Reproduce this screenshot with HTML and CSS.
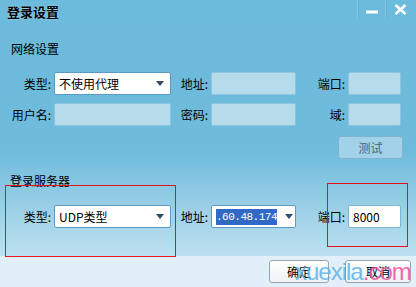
FILE: index.html
```html
<!DOCTYPE html>
<html lang="zh-CN">
<head>
<meta charset="UTF-8">
<title>登录设置</title>
<link rel="stylesheet" href="styles.css">
</head>
<body>
<div class="window">
    <div class="titlebar">
        <span class="title">登录设置</span>
        <div class="win-buttons">
            <span class="win-btn min"><svg width="12" height="4" viewBox="0 0 12 4"><rect x="0" y="0.5" width="12" height="3" fill="#fff"/></svg></span>
            <span class="win-btn close"><svg width="13" height="11" viewBox="0 0 13 11"><path d="M1.5 1 L11.5 10 M11.5 1 L1.5 10" stroke="#fff" stroke-width="2.6"/></svg></span>
        </div>
    </div>

    <div class="section-title">网络设置</div>
    <div class="form-grid">
        <label>类型:</label>
        <div class="select"><span>不使用代理</span><i class="arrow"></i></div>
        <label>地址:</label>
        <div class="input disabled"></div>
        <label>端口:</label>
        <div class="input disabled"></div>

        <label>用户名:</label>
        <div class="input disabled"></div>
        <label>密码:</label>
        <div class="input disabled"></div>
        <label>域:</label>
        <div class="input disabled"></div>
    </div>
    <div class="test-row">
        <button class="btn-test">测试</button>
    </div>

    <div class="section-title second">登录服务器</div>
    <div class="form-grid server">
        <label>类型:</label>
        <div class="select"><span>UDP类型</span><i class="arrow"></i></div>
        <label>地址:</label>
        <div class="select addr"><span class="selected">.60.48.174</span><i class="arrow"></i></div>
        <label>端口:</label>
        <div class="input"><span>8000</span></div>
    </div>

    <div class="footer">
        <button class="btn">确定</button>
        <button class="btn">取消</button>
    </div>

    <div class="mark mark-left"></div>
    <div class="mark mark-right"></div>
    <div class="watermark"><span class="wm-blue">xuexila</span><span class="wm-pink">.com</span></div>
</div>
</body>
</html>
```

FILE: styles.css
```css
body {
    margin: 0;
    padding: 0;
    font-family: "Noto Sans CJK SC", "DejaVu Sans", sans-serif;
    font-size: 12px;
    color: #000;
}
.window {
    position: relative;
    width: 416px;
    height: 287px;
    display: flex;
    flex-direction: column;
    overflow: hidden;
    background: linear-gradient(to bottom, #6dbbdc 0px, #6ebbdc 150px, #a0d2e8 215px, #bde0f0 256px);
}
.titlebar {
    height: 26px;
    display: flex;
    align-items: flex-start;
    justify-content: space-between;
}
.title {
    font-weight: bold;
    font-size: 13px;
    line-height: 15px;
    padding: 4px 0 0 7px;
    color: #000;
    text-shadow: 0 0 2px rgba(255, 255, 255, 0.5);
}
.win-buttons {
    display: flex;
    height: 19px;
    margin-right: 2px;
}
.win-btn {
    width: 27px;
    display: flex;
    align-items: center;
    justify-content: center;
    border-left: 1px solid #86c6e2;
    box-shadow: inset 1px 0 0 #62aed0;
}
.win-btn.min svg {
    margin-top: 4px;
}
.win-btn.close {
    width: 28px;
}
.section-title {
    margin: 15px 0 0 11px;
    line-height: 16px;
}
.section-title.second {
    margin: 14px 0 0 10px;
}
.form-grid {
    display: grid;
    grid-template-columns: 51px 117px 34px 85px 46px 53px;
    grid-auto-rows: 23px;
    column-gap: 3px;
    row-gap: 8px;
    margin-top: 15px;
    align-items: center;
}
.form-grid.server {
    margin-top: 16px;
}
.form-grid label {
    text-align: right;
    white-space: nowrap;
    line-height: 23px;
}
.input,
.select {
    height: 23px;
    box-sizing: border-box;
    border: 1px solid #7fb4d2;
    border-radius: 2px;
    background: #fff;
    display: flex;
    align-items: center;
    padding: 0 4px;
    position: relative;
}
.input.disabled {
    background: #b6dcec;
    border-color: #8ec4de;
}
.select {
    border-color: #5b9ac4;
}
.select span {
    flex: 1;
}
.select .arrow {
    width: 0;
    height: 0;
    border-left: 4px solid transparent;
    border-right: 4px solid transparent;
    border-top: 5px solid #2f4d66;
    margin-right: 2px;
}
.select.addr span {
    flex: none;
    margin-right: 8px;
}
.selected {
    background: #3169c6;
    color: #fff;
    font-family: "Liberation Mono", monospace;
    font-size: 11px;
    line-height: 16px;
    letter-spacing: -0.5px;
}
.test-row {
    display: flex;
    justify-content: flex-end;
    padding-right: 13px;
    margin-top: 10px;
}
.btn-test {
    width: 65px;
    height: 23px;
    border: 1px solid #7eb4d0;
    border-radius: 3px;
    background: #a2d2e9;
    color: #4b6679;
    font-family: inherit;
    font-size: 12px;
    padding: 0;
}
.footer {
    margin-top: auto;
    height: 31px;
    box-sizing: border-box;
    background: #e1f0f8;
    display: flex;
    justify-content: flex-end;
    gap: 16px;
    padding: 4px 5px 0 0;
}
.btn {
    width: 60px;
    height: 23px;
    border: 1px solid #9aa4ad;
    border-radius: 3px;
    background: linear-gradient(to bottom, #ffffff, #eef3f6);
    font-family: inherit;
    font-size: 12px;
    padding: 0;
    color: #000;
}
.btn + .btn {
    width: 66px;
}
.mark {
    position: absolute;
    border: 1px solid #e8121a;
}
.mark-left {
    left: 5px;
    top: 185px;
    width: 169px;
    height: 70px;
}
.mark-right {
    left: 327px;
    top: 183px;
    width: 79px;
    height: 62px;
}
.watermark {
    position: absolute;
    left: 295px;
    top: 258px;
    font-family: "Liberation Sans", sans-serif;
    font-size: 24px;
    line-height: 28px;
    letter-spacing: -1px;
    opacity: 0.85;
}
.wm-blue {
    color: #5cb5e6;
}
.wm-pink {
    color: #f0529c;
}
```
